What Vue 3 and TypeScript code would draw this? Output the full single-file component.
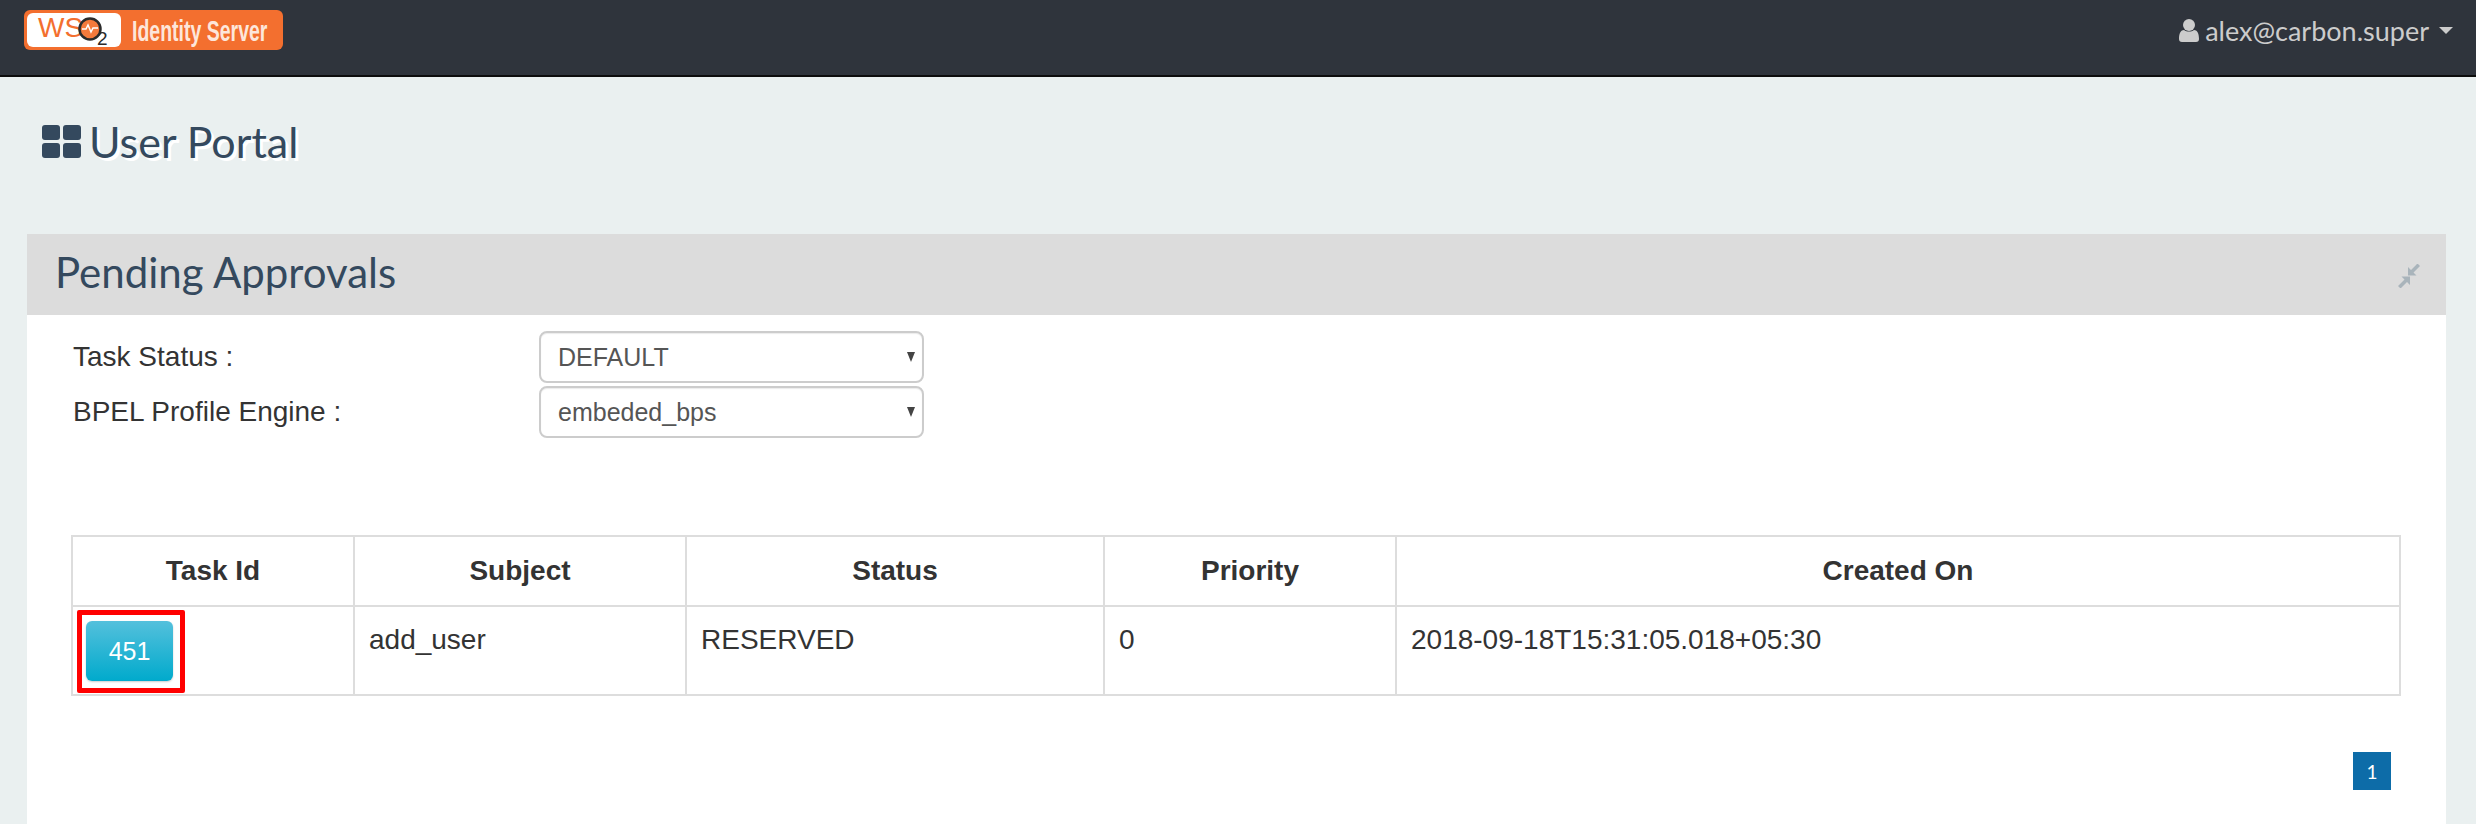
<template>
  <div class="page">
    <header class="topbar">
      <svg class="logo" viewBox="0 0 259 40" role="img" aria-label="WSO2 Identity Server">
        <rect width="259" height="40" rx="6" fill="#f36f2f" />
        <rect x="3" y="3" width="94" height="34" rx="6" fill="#fff" />
        <text x="14" y="27" class="logo-wso">WS</text>
        <circle cx="66" cy="19" r="10.500" fill="#f47a3c" stroke="#2b2b2b" stroke-width="2.500" />
        <path d="M58 19h4l2-4 3 7 2-4h5" fill="none" stroke="#fff" stroke-width="1.500" />
        <text x="73" y="35" class="logo-two">2</text>
        <text transform="translate(108 31) scale(.65 1)" class="logo-name">Identity Server</text>
      </svg>
      <div class="user">
        <svg class="user-icon" viewBox="0 0 20 23" aria-hidden="true">
          <circle cx="10" cy="6" r="6" fill="#ccc" />
          <path d="M0 20c0-6 2-9 5-9 1.500 1 3 1.500 5 1.500s3.500-.5 5-1.500c3 0 5 3 5 9 0 2-1 3-3 3H3c-2 0-3-1-3-3z" fill="#ccc" />
        </svg>
        <span>alex@carbon.super</span>
        <i class="caret"></i>
      </div>
    </header>

    <h1 class="page-title">
      <svg class="grid-icon" viewBox="0 0 39 33" aria-hidden="true">
        <rect width="18" height="15" rx="3" />
        <rect x="21" width="18" height="15" rx="3" />
        <rect y="18" width="18" height="15" rx="3" />
        <rect x="21" y="18" width="18" height="15" rx="3" />
      </svg>
      <span>User Portal</span>
    </h1>

    <section class="panel">
      <div class="panel-head">
        <h2>Pending Approvals</h2>
        <svg class="collapse" viewBox="0 0 24 24" aria-hidden="true">
          <path d="M11 3v8.500h8.500l-3-3 6.500-6.500-2.500-2.500-6.500 6.500zM13 21v-8.500H4.500l3 3-6.500 6.500 2.500 2.500 6.500-6.500z" />
        </svg>
      </div>

      <form class="filters">
        <label v-for="f in filters" :key="f.label" class="filter">
          <span class="filter-label">{{ f.label }}</span>
          <span class="select-wrap">
            <select class="filter-select">
              <option>{{ f.value }}</option>
            </select>
          </span>
        </label>
      </form>

      <table class="tasks">
        <colgroup>
          <col class="c1" /><col class="c2" /><col class="c3" /><col class="c4" /><col />
        </colgroup>
        <thead>
          <tr>
            <th v-for="h in headers" :key="h">{{ h }}</th>
          </tr>
        </thead>
        <tbody>
          <tr>
            <td class="id-cell">
              <span class="callout"><button type="button" class="task-btn">451</button></span>
            </td>
            <td>add_user</td>
            <td>RESERVED</td>
            <td>0</td>
            <td>2018-09-18T15:31:05.018+05:30</td>
          </tr>
        </tbody>
      </table>

      <nav class="pager"><a class="pager-item">1</a></nav>
    </section>
  </div>
</template>

<script setup lang="ts">
const filters = [
  { label: 'Task Status :', value: 'DEFAULT' },
  { label: 'BPEL Profile Engine :', value: 'embeded_bps' },
]

const headers = ['Task Id', 'Subject', 'Status', 'Priority', 'Created On']
</script>

<style>
html,
body {
  margin: 0;
  background: #eaf0f0;
}
</style>

<style scoped>
.page {
  height: 824px;
  overflow: hidden;
  display: flex;
  flex-direction: column;
  background: #eaf0f0;
  font-family: 'Liberation Sans', Arial, sans-serif;
  color: #333;
}

.topbar {
  flex: none;
  height: 75px;
  display: flex;
  align-items: flex-start;
  justify-content: space-between;
  padding: 0 22px 0 24px;
  background: #2f343c;
  border-bottom: 2px solid #0d0d0d;
}

.logo {
  width: 259px;
  height: 40px;
  margin-top: 10px;
}

.logo-wso {
  font: 400 28px 'Liberation Sans', sans-serif;
  fill: #f36f2f;
}

.logo-two {
  font: 400 19px 'Liberation Sans', sans-serif;
  fill: #2b2b2b;
}

.logo-name {
  font: 700 30px 'Liberation Sans', sans-serif;
  fill: #fde6da;
}

.user {
  display: flex;
  align-items: center;
  height: 61px;
  font-family: Lato, sans-serif;
  font-size: 27px;
  color: #ccc;
}

.user-icon {
  width: 20px;
  height: 23px;
  margin-right: 6px;
}

.caret {
  width: 0;
  height: 0;
  margin-left: 10px;
  margin-right: 1px;
  border-left: 7px solid transparent;
  border-right: 7px solid transparent;
  border-top: 7px solid #ccc;
}

.page-title {
  flex: none;
  display: flex;
  align-items: center;
  gap: 8px;
  height: 157px;
  margin: 0;
  padding: 0 0 28px 42px;
  box-sizing: border-box;
  font-family: Lato, sans-serif;
  font-size: 43px;
  font-weight: 400;
  color: #34495e;
  text-shadow: 3px 3px 0 #fff;
}

.grid-icon {
  width: 39px;
  height: 33px;
  fill: #34495e;
}

.panel {
  flex: 1;
  margin: 0 30px 0 27px;
  background: #fff;
}

.panel-head {
  height: 81px;
  box-sizing: border-box;
  display: flex;
  align-items: center;
  justify-content: space-between;
  padding: 0 25px 0 28px;
  background: #dcdcdc;
}

.panel-head h2 {
  margin: 0 0 5px;
  font-family: Lato, sans-serif;
  font-size: 42px;
  font-weight: 400;
  color: #34495e;
}

.collapse {
  width: 24px;
  height: 24px;
  margin-top: 2px;
  fill: #a9b4bb;
}

.filters {
  display: flex;
  flex-direction: column;
  gap: 3px;
  padding: 16px 0 0 46px;
}

.filter {
  display: flex;
  align-items: center;
  height: 52px;
}

.filter-label {
  width: 466px;
  font-size: 28px;
  color: #333;
}

.select-wrap {
  position: relative;
  display: block;
  width: 385px;
  height: 52px;
}

.select-wrap::after {
  content: '';
  position: absolute;
  top: 21px;
  right: 9px;
  border-left: 4.500px solid transparent;
  border-right: 4.500px solid transparent;
  border-top: 10px solid #444;
  pointer-events: none;
}

.filter-select {
  display: block;
  width: 100%;
  height: 100%;
  padding: 0 17px;
  font: 25px 'Liberation Sans', sans-serif;
  color: #555;
  background: #fff;
  border: 2px solid #ccc;
  border-radius: 8px;
  box-shadow: inset 0 1px 1px rgba(0, 0, 0, 0.08);
  appearance: none;
}

.tasks {
  width: 2330px;
  margin: 97px 0 0 44px;
  border-collapse: collapse;
  table-layout: fixed;
  font-size: 28px;
}

.c1 {
  width: 282px;
}

.c2 {
  width: 332px;
}

.c3 {
  width: 418px;
}

.c4 {
  width: 292px;
}

.tasks th,
.tasks td {
  border: 2px solid #ddd;
}

.tasks th {
  height: 68px;
  padding: 0 14px;
  font-weight: 700;
  text-align: center;
}

.tasks td {
  height: 89px;
  padding: 17px 14px 0;
  box-sizing: border-box;
  vertical-align: top;
}

.tasks .id-cell {
  padding: 3px 0 0 4px;
}

.callout {
  display: block;
  width: 108px;
  height: 83px;
  box-sizing: border-box;
  padding: 6px 4px;
  border: 5px solid #f00;
  border-radius: 2px;
}

.task-btn {
  display: block;
  width: 87px;
  height: 60px;
  padding: 0;
  border: 0;
  border-radius: 6px;
  font: 25px 'Liberation Sans', sans-serif;
  color: #fff;
  background: linear-gradient(#54c0dc, #00aacc);
  box-shadow: 0 1px 2px rgba(0, 0, 0, 0.2);
}

.pager {
  display: flex;
  justify-content: flex-end;
  margin: 56px 55px 0 0;
}

.pager-item {
  width: 38px;
  height: 38px;
  display: flex;
  align-items: center;
  justify-content: center;
  font-family: Lato, sans-serif;
  font-size: 19px;
  color: #fff;
  background: #0d6ca8;
}
</style>
